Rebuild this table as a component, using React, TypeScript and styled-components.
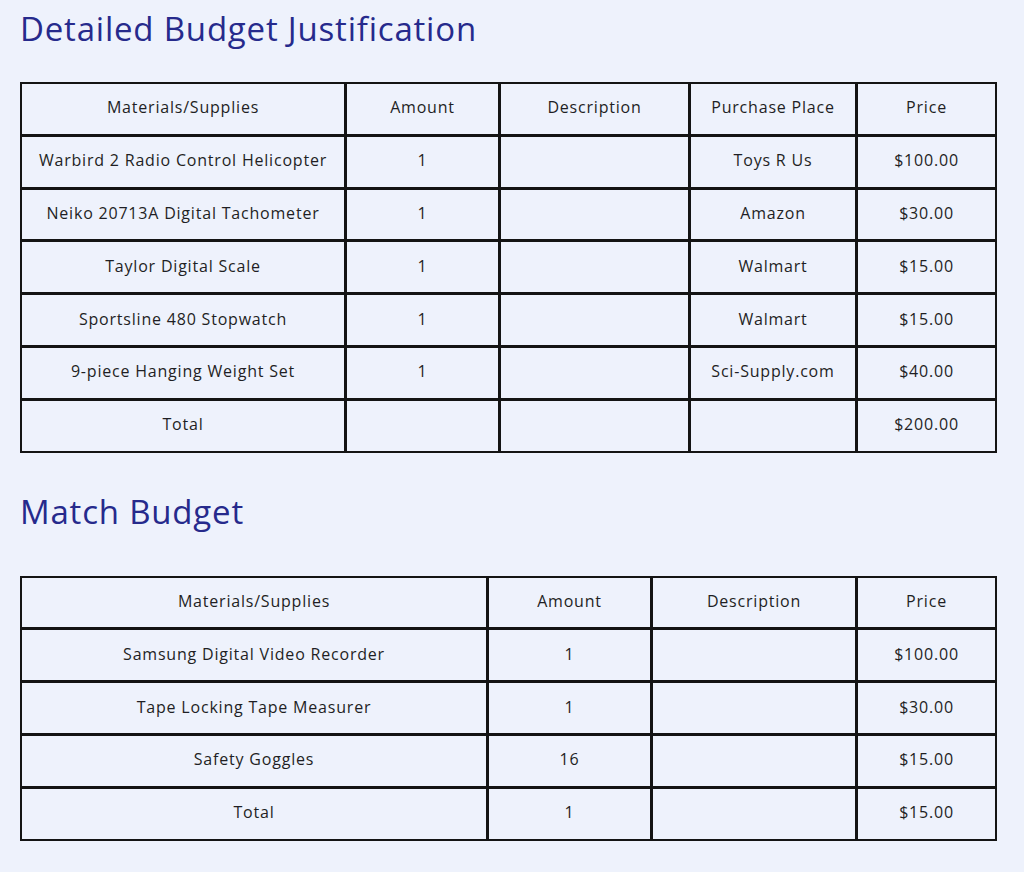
import React from "react";
import styled, { createGlobalStyle } from "styled-components";

const Global = createGlobalStyle`
  html, body { margin: 0; padding: 0; background: #eef2fc; }
  body { font-family: "Open Sans", "Noto Sans", Arial, sans-serif; color: #1f1f24; }
`;

const Page = styled.div`
  width: 977px;
  padding: 0 27px 30px 20px;
  display: flex;
  flex-direction: column;
`;

const Heading = styled.h2<{ $top: number; $bottom: number }>`
  margin: ${(p) => p.$top}px 0 ${(p) => p.$bottom}px 0;
  font-size: 33px;
  line-height: 40px;
  font-weight: 400;
  color: #262a8c;
  letter-spacing: 0.8px;
`;

const Table = styled.table<{ $row: number }>`
  width: 977px;
  box-sizing: border-box;
  table-layout: fixed;
  border-collapse: separate;
  border-spacing: 0;
  border: 2px solid #141414;
  --row: ${(p) => p.$row}px;
`;

const Cell = styled.td`
  box-sizing: content-box;
  border: 0;
  border-right: 3px solid #141414;
  border-bottom: 3px solid #141414;
  height: calc(var(--row) - 3px);
  padding: 0 4px 3px;
  text-align: center;
  vertical-align: middle;
  font-size: 16px;
  color: #1f1f24;
  white-space: nowrap;
  letter-spacing: 0.8px;
  &:last-child { border-right: 0; }
  tbody > tr:last-child > & { border-bottom: 0; }
`;

const HeadCell = styled(Cell).attrs({ as: "th" })`
  font-weight: 400;
`;

type TableData = { widths: number[]; row: number; head: string[]; rows: string[][] };

const budget: TableData = {
  widths: [325, 154, 190, 167],
  row: 49.8,
  head: ["Materials/Supplies", "Amount", "Description", "Purchase Place", "Price"],
  rows: [
    ["Warbird 2 Radio Control Helicopter", "1", "", "Toys R Us", "$100.00"],
    ["Neiko 20713A Digital Tachometer", "1", "", "Amazon", "$30.00"],
    ["Taylor Digital Scale", "1", "", "Walmart", "$15.00"],
    ["Sportsline 480 Stopwatch", "1", "", "Walmart", "$15.00"],
    ["9-piece Hanging Weight Set", "1", "", "Sci-Supply.com", "$40.00"],
    ["Total", "", "", "", "$200.00"],
  ],
};

const match: TableData = {
  widths: [467, 164, 205],
  row: 49.8,
  head: ["Materials/Supplies", "Amount", "Description", "Price"],
  rows: [
    ["Samsung Digital Video Recorder", "1", "", "$100.00"],
    ["Tape Locking Tape Measurer", "1", "", "$30.00"],
    ["Safety Goggles", "16", "", "$15.00"],
    ["Total", "1", "", "$15.00"],
  ],
};

function DataTable({ data }: { data: TableData }) {
  return (
    <Table $row={data.row}>
      <colgroup>
        {data.head.map((_, i) => (
          <col key={i} style={data.widths[i] ? { width: data.widths[i] } : undefined} />
        ))}
      </colgroup>
      <thead>
        <tr>
          {data.head.map((h) => (
            <HeadCell key={h}>{h}</HeadCell>
          ))}
        </tr>
      </thead>
      <tbody>
        {data.rows.map((r, i) => (
          <tr key={i}>
            {r.map((c, j) => (
              <Cell key={j}>{c}</Cell>
            ))}
          </tr>
        ))}
      </tbody>
    </Table>
  );
}

export default function App() {
  return (
    <>
      <Global />
      <Page>
        <Heading $top={9} $bottom={33}>Detailed Budget Justification</Heading>
        <DataTable data={budget} />
        <Heading $top={39} $bottom={44}>Match Budget</Heading>
        <DataTable data={match} />
      </Page>
    </>
  );
}
